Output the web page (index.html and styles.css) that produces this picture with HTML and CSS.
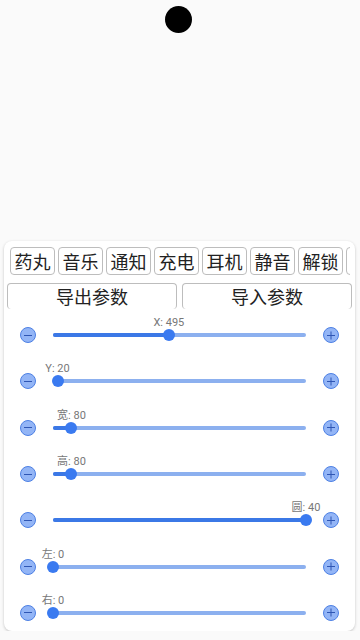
FILE: index.html
```html
<!DOCTYPE html>
<html lang="zh">
<head>
    <meta charset="UTF-8">
    <meta name="viewport" content="width=device-width, initial-scale=1.0">
    <title>悬浮设置</title>
    <link rel="stylesheet" href="styles.css">
</head>
<body>
    <div class="top">
        <div class="dot"></div>
    </div>
    <div class="panel">
        <div class="mode-row">
            <button class="mode">药丸</button>
            <button class="mode">音乐</button>
            <button class="mode">通知</button>
            <button class="mode">充电</button>
            <button class="mode">耳机</button>
            <button class="mode">静音</button>
            <button class="mode">解锁</button>
            <button class="mode"></button>
        </div>
        <div class="tabs">
            <button class="tab">导出参数</button>
            <button class="tab">导入参数</button>
        </div>

        <div class="row">
            <span class="step minus"></span>
            <div class="track">
                <div class="fill" style="width: 45.8%"></div>
                <div class="thumb" style="left: 45.8%"><span class="label">X: 495</span></div>
            </div>
            <span class="step plus"></span>
        </div>
        <div class="row">
            <span class="step minus"></span>
            <div class="track">
                <div class="fill" style="width: 1.8%"></div>
                <div class="thumb" style="left: 1.8%"><span class="label">Y: 20</span></div>
            </div>
            <span class="step plus"></span>
        </div>
        <div class="row">
            <span class="step minus"></span>
            <div class="track">
                <div class="fill" style="width: 7.3%"></div>
                <div class="thumb" style="left: 7.3%"><span class="label">宽: 80</span></div>
            </div>
            <span class="step plus"></span>
        </div>
        <div class="row">
            <span class="step minus"></span>
            <div class="track">
                <div class="fill" style="width: 7.3%"></div>
                <div class="thumb" style="left: 7.3%"><span class="label">高: 80</span></div>
            </div>
            <span class="step plus"></span>
        </div>
        <div class="row">
            <span class="step minus"></span>
            <div class="track">
                <div class="fill" style="width: 100%"></div>
                <div class="thumb" style="left: 100%"><span class="label">圆: 40</span></div>
            </div>
            <span class="step plus"></span>
        </div>
        <div class="row">
            <span class="step minus"></span>
            <div class="track">
                <div class="fill" style="width: 0%"></div>
                <div class="thumb" style="left: 0%"><span class="label">左: 0</span></div>
            </div>
            <span class="step plus"></span>
        </div>
        <div class="row">
            <span class="step minus"></span>
            <div class="track">
                <div class="fill" style="width: 0%"></div>
                <div class="thumb" style="left: 0%"><span class="label">右: 0</span></div>
            </div>
            <span class="step plus"></span>
        </div>
    </div>
</body>
</html>
```

FILE: styles.css
```css
body {
    margin: 0;
    background: #fafafa;
    font-family: Roboto, "Noto Sans CJK SC", sans-serif;
    color: #222;
}
.top {
    height: 241px;
    padding-top: 6px;
    box-sizing: border-box;
}
.dot {
    width: 27px;
    height: 27px;
    margin-left: 165px;
    border-radius: 50%;
    background: #000;
}
.panel {
    width: 351px;
    margin-left: 4px;
    height: 390px;
    padding-top: 6px;
    box-sizing: border-box;
    background: #fff;
    border-radius: 8px;
    box-shadow: 0 1px 3px rgba(0, 0, 0, 0.22);
    overflow: hidden;
}
.mode-row {
    display: flex;
    gap: 3px;
    width: 346px;
    padding-left: 6px;
    box-sizing: border-box;
    overflow: hidden;
    white-space: nowrap;
}
.mode {
    flex: none;
    width: 45px;
    height: 28px;
    padding: 0;
    font-family: "Noto Sans CJK SC", sans-serif;
    font-size: 18px;
    line-height: 26px;
    color: #222;
    background: #fff;
    border: 1px solid #bdbdbd;
    border-radius: 4px;
}
.tabs {
    display: flex;
    gap: 5px;
    margin-top: 8px;
    padding-left: 3px;
}
.tab {
    width: 170px;
    height: 26px;
    padding: 0;
    font-family: "Noto Sans CJK SC", sans-serif;
    font-size: 18px;
    line-height: 25px;
    color: #222;
    background: #fff;
    border: 1px solid #bdbdbd;
    border-bottom: none;
    border-radius: 4px;
}
.tabs + .row {
    margin-top: 3px;
}
.row {
    display: flex;
    align-items: center;
    height: 46.3px;
    padding-left: 16px;
}
.step {
    position: relative;
    flex: none;
    width: 16px;
    height: 16px;
    box-sizing: border-box;
    border-radius: 50%;
    background: #93b5f6;
    border: 1px solid #4d80e4;
}
.step::before,
.step::after {
    content: "";
    position: absolute;
    left: 3px;
    top: 6.5px;
    width: 8px;
    height: 1px;
    background: #2f56b4;
}
.minus::after {
    display: none;
}
.plus::after {
    transform: rotate(90deg);
}
.track {
    position: relative;
    width: 253px;
    height: 4px;
    margin: 0 17px;
    border-radius: 2px;
    background: #8cb0ef;
}
.fill {
    height: 4px;
    border-radius: 2px;
    background: #3b78e6;
}
.thumb {
    position: absolute;
    top: -4px;
    width: 12px;
    height: 12px;
    margin-left: -6px;
    border-radius: 50%;
    background: #3a7af0;
}
.label {
    position: absolute;
    bottom: 12px;
    left: 50%;
    transform: translateX(-50%);
    font-size: 11px;
    color: #777;
    white-space: nowrap;
}
```
